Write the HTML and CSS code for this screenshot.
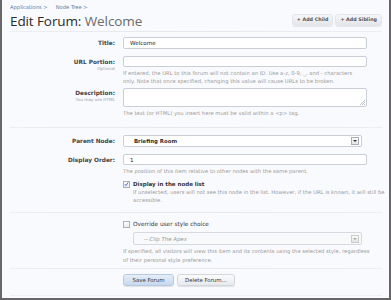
FILE: index.html
```html
<!DOCTYPE html>
<html>
<head>
<meta charset="utf-8">
<link rel="stylesheet" href="styles.css">
</head>
<body>
<div class="page">
  <div class="crumbs"><span class="crumb">Applications &gt;</span><span class="crumb">Node Tree &gt;</span></div>
  <div class="titlebar">
    <h1>Edit Forum: <span class="name">Welcome</span></h1>
    <div class="top-btns"><span class="tbtn">+ Add Child</span><span class="tbtn">+ Add Sibling</span></div>
  </div>
  <div class="sep"></div>

  <div class="row r-title">
    <div class="lbl">Title:</div>
    <div class="ctl"><div class="input">Welcome</div></div>
  </div>

  <div class="row r-url">
    <div class="lbl">URL Portion:<div class="hint">Optional</div></div>
    <div class="ctl">
      <div class="input"></div>
      <p class="explain tight">If entered, the URL to this forum will not contain an ID. Use a-z, 0-9, _, and - characters only. Note that once specified, changing this value will cause URLs to be broken.</p>
    </div>
  </div>

  <div class="row r-desc">
    <div class="lbl">Description:<div class="hint">You may use HTML</div></div>
    <div class="ctl">
      <div class="input textarea"><svg class="grip" width="5" height="5" viewBox="0 0 5 5"><path d="M5 0L0 5M5 2L2 5M5 4L4 5" stroke="#999" stroke-width="0.6"/></svg></div>
      <p class="explain">The text (or HTML) you insert here must be valid within a &lt;p&gt; tag.</p>
    </div>
  </div>

  <div class="sep s2"></div>

  <div class="row r-parent">
    <div class="lbl">Parent Node:</div>
    <div class="ctl"><div class="select"><span class="val">Briefing Room</span><span class="arrow"></span></div></div>
  </div>

  <div class="row r-order">
    <div class="lbl">Display Order:</div>
    <div class="ctl">
      <div class="input">1</div>
      <p class="explain">The position of this item relative to other nodes with the same parent.</p>
    </div>
  </div>

  <div class="row r-check">
    <div class="lbl"></div>
    <div class="ctl">
      <div class="check"><span class="box checked"><svg width="6" height="6" viewBox="0 0 6 6"><path d="M1 3.2L2.4 4.8L5 1" fill="none" stroke="#3b4fa3" stroke-width="1"/></svg></span><span class="check-lbl strong">Display in the node list</span></div>
      <p class="explain indent">If unselected, users will not see this node in the list. However, if the URL is known, it will still be accessible.</p>
    </div>
  </div>

  <div class="sep s3"></div>

  <div class="row r-style">
    <div class="lbl"></div>
    <div class="ctl">
      <div class="check"><span class="box"></span><span class="check-lbl">Override user style choice</span></div>
      <div class="select disabled"><span class="val">-- Clip The Apex</span><span class="arrow"></span></div>
      <p class="explain wide">If specified, all visitors will view this item and its contents using the selected style, regardless of their personal style preference.</p>
    </div>
  </div>

  <div class="sep s4"></div>

  <div class="row r-submit">
    <div class="lbl"></div>
    <div class="ctl btns"><span class="btn primary">Save Forum</span><span class="btn">Delete Forum...</span></div>
  </div>
  <div class="foot"></div>
</div>
</body>
</html>
```
FILE: styles.css
```css
html, body { margin: 0; padding: 0; }
body { background: #fff; font-family: "DejaVu Sans", Verdana, sans-serif; color: #333; }
.page {
  box-sizing: border-box;
  width: 391px; height: 300px;
  border: 2px solid #676767; border-top: 0;
  background: #f9fafd;
  padding: 0 7px 0 8px;
  display: flex; flex-direction: column;
}
.crumbs { display: flex; gap: 8px; padding-top: 4px; height: 7px; font-size: 5.2px; line-height: 7px; color: #5b7aa0; }
.titlebar { display: flex; justify-content: space-between; align-items: flex-start; height: 18px; margin-top: 1px; }
h1 { margin: 0; font-family: "Open Sans", sans-serif; font-weight: normal; font-size: 13.5px; line-height: 18px; color: #2b2b2b; letter-spacing: -0.1px; }
h1 .name { color: #6a6a6a; }
.top-btns { display: flex; gap: 2px; margin-top: 2px; }
.tbtn { display: inline-block; height: 10px; line-height: 10px; padding: 0 4px; font-size: 4.8px; font-weight: bold; color: #555; border-radius: 3px; background: linear-gradient(#f6f7f9, #e3e5ea); border: 1px solid #e3e5ea; box-shadow: 0 1px 1px rgba(0,0,0,0.08); }
.sep { height: 1px; background: linear-gradient(90deg, #eceef2, #e4e7ec 50%, #eceef2); margin-top: 1px; }

.row { display: flex; align-items: flex-start; }
.lbl { width: 105px; flex: none; text-align: right; font-size: 5.8px; font-weight: bold; color: #444; line-height: 8px; }
.hint { font-size: 4.2px; font-weight: normal; color: #a0a0a0; line-height: 6px; }
.ctl { margin-left: 8px; width: 260px; }
.input { box-sizing: border-box; width: 244px; height: 12px; background: #fff; border: 1px solid #c9ced7; border-radius: 2px; font-size: 5.6px; line-height: 10px; padding: 0 6px; color: #222; }
.textarea { height: 19px; position: relative; }
.grip { position: absolute; right: 1px; bottom: 1px; }
.explain { margin: 0; width: 244px; font-size: 5.25px; line-height: 8px; color: #9a9a9a; padding-top: 2px; }
.explain.tight { width: 236px; }
.explain.wide { width: 252px; }

.r-title { margin-top: 5px; }
.r-title .lbl { padding-top: 2px; }
.r-url { margin-top: 7px; }
.r-url .input { height: 11px; }
.r-url .lbl { padding-top: 2px; }
.r-desc { margin-top: 3px; }
.r-desc .lbl { padding-top: 1px; }
.sep.s2 { margin-top: 10px; }
.r-parent { margin-top: 7px; }
.r-parent .lbl { padding-top: 2px; }
.select { box-sizing: border-box; width: 239px; height: 12px; background: #fff; border: 1px solid #c9ced7; border-radius: 2px; display: flex; align-items: center; justify-content: space-between; padding: 0 2px 0 10px; font-size: 5.4px; font-weight: bold; color: #333; }
.arrow { width: 6px; height: 6px; border: 1px solid #aab; background: linear-gradient(#fafafa, #e4e4e4); position: relative; }
.arrow::after { content: ""; position: absolute; left: 1px; top: 2px; border-left: 2px solid transparent; border-right: 2px solid transparent; border-top: 2px solid #333; }
.r-order { margin-top: 7px; }
.r-order .input { height: 11px; }
.r-order .lbl { padding-top: 2px; }
.r-check { margin-top: 5px; }
.check { display: flex; align-items: center; gap: 3px; height: 8px; }
.box { box-sizing: border-box; width: 7px; height: 7px; border: 1px solid #aab0bb; background: linear-gradient(#fff, #e8eaef); display: flex; align-items: center; justify-content: center; }
.check-lbl { font-size: 5.8px; color: #333; }
.check-lbl.strong { font-weight: bold; font-size: 5.5px; }
.explain.indent { width: 252px; padding-left: 10px; padding-top: 0; }
.sep.s3 { margin-top: 8px; }
.r-style { margin-top: 7px; }
.select.disabled { margin-left: 10px; width: 229px; height: 13px; margin-top: 4px; font-weight: normal; font-style: italic; color: #999; background: #f8f9fb; border-color: #d6d9df; }
.select.disabled .arrow { border-color: #ccc; }
.select.disabled .arrow::after { border-top-color: #aaa; }
.r-style .explain { line-height: 9px; }
.sep.s4 { margin-top: 3px; }
.r-submit { margin-top: 5px; }
.btns { display: flex; gap: 3px; }
.btn { box-sizing: border-box; height: 12px; line-height: 10px; padding: 0 7px; border-radius: 3px; font-size: 5.4px; color: #333; border: 1px solid #d3d6dc; background: linear-gradient(#fbfbfc, #e7e9ed); box-shadow: 0 1px 1px rgba(0,0,0,0.1); }
.btn.primary { width: 51px; text-align: center; padding: 0; border-color: #b6cbe2; background: linear-gradient(#e6eef8, #c6d8ee); }
.foot { margin-top: auto; height: 2px; border-top: 1px solid #eef0f4; }
```
